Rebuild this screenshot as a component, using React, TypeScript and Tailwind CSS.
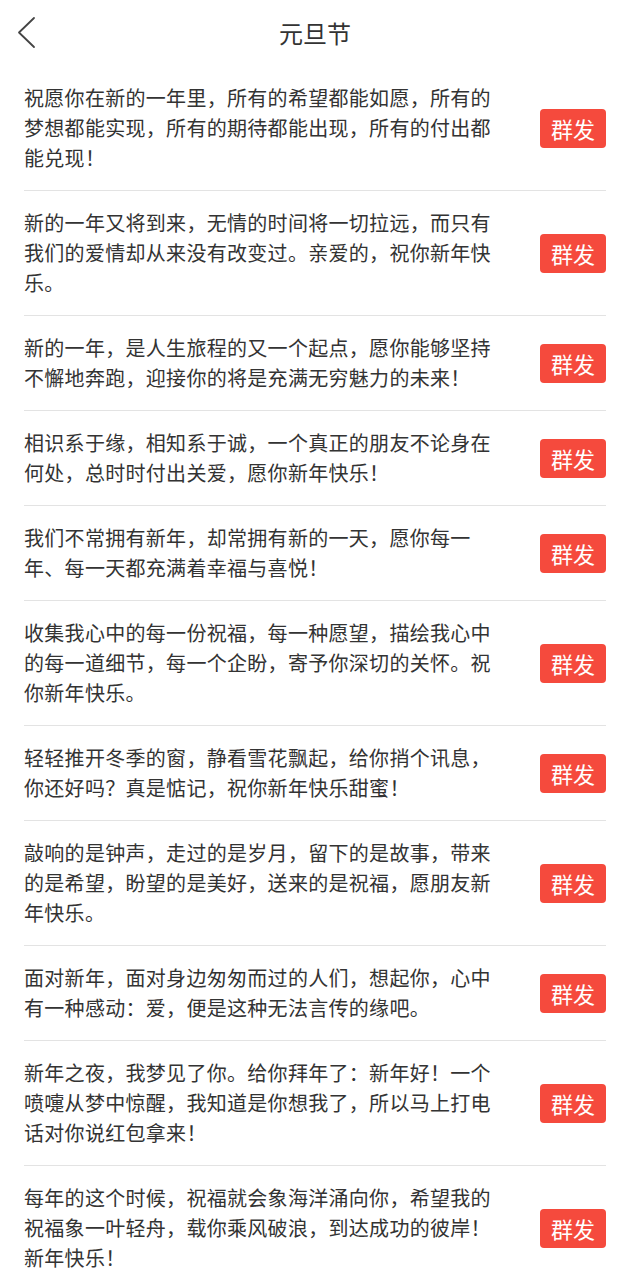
// 元旦节 祝福短信列表
const messages = [
  "祝愿你在新的一年里，所有的希望都能如愿，所有的梦想都能实现，所有的期待都能出现，所有的付出都能兑现！",
  "新的一年又将到来，无情的时间将一切拉远，而只有我们的爱情却从来没有改变过。亲爱的，祝你新年快乐。",
  "新的一年，是人生旅程的又一个起点，愿你能够坚持不懈地奔跑，迎接你的将是充满无穷魅力的未来！",
  "相识系于缘，相知系于诚，一个真正的朋友不论身在何处，总时时付出关爱，愿你新年快乐！",
  "我们不常拥有新年，却常拥有新的一天，愿你每一年、每一天都充满着幸福与喜悦！",
  "收集我心中的每一份祝福，每一种愿望，描绘我心中的每一道细节，每一个企盼，寄予你深切的关怀。祝你新年快乐。",
  "轻轻推开冬季的窗，静看雪花飘起，给你捎个讯息，你还好吗？真是惦记，祝你新年快乐甜蜜！",
  "敲响的是钟声，走过的是岁月，留下的是故事，带来的是希望，盼望的是美好，送来的是祝福，愿朋友新年快乐。",
  "面对新年，面对身边匆匆而过的人们，想起你，心中有一种感动：爱，便是这种无法言传的缘吧。",
  "新年之夜，我梦见了你。给你拜年了：新年好！一个喷嚏从梦中惊醒，我知道是你想我了，所以马上打电话对你说红包拿来！",
  "每年的这个时候，祝福就会象海洋涌向你，希望我的祝福象一叶轻舟，载你乘风破浪，到达成功的彼岸！新年快乐！",
];

export default function App() {
  return (
    <div
      className="min-h-screen bg-white text-[#333]"
      style={{ fontFamily: '"Noto Sans CJK SC", "Noto Sans", sans-serif' }}
    >
      {/* 顶部导航 */}
      <header className="relative flex h-[66px] items-center justify-center">
        <button className="absolute left-[14px] top-[14px] text-[#444]">
          <svg width="24" height="38" viewBox="0 0 24 38" fill="none">
            <polyline
              points="20,4 5,18.5 20,33"
              stroke="currentColor"
              strokeWidth="1.8"
              strokeLinecap="round"
              strokeLinejoin="round"
            />
          </svg>
        </button>
        <h1 className="text-[24px] font-normal text-[#333]">元旦节</h1>
      </header>

      {/* 列表 */}
      <ul className="px-6">
        {messages.map((text, i) => (
          <li
            key={i}
            className="flex items-center justify-between border-b border-[#e3e3e3] py-[17px]"
          >
            <p className="w-[475px] text-[20px] leading-[30px] tracking-[0.3px] text-[#333]">
              {text}
            </p>
            <button className="flex h-[39px] w-[66px] shrink-0 items-center justify-center rounded-[4px] bg-[#f54a3d] text-[22px] text-white">
              群发
            </button>
          </li>
        ))}
      </ul>
    </div>
  );
}
